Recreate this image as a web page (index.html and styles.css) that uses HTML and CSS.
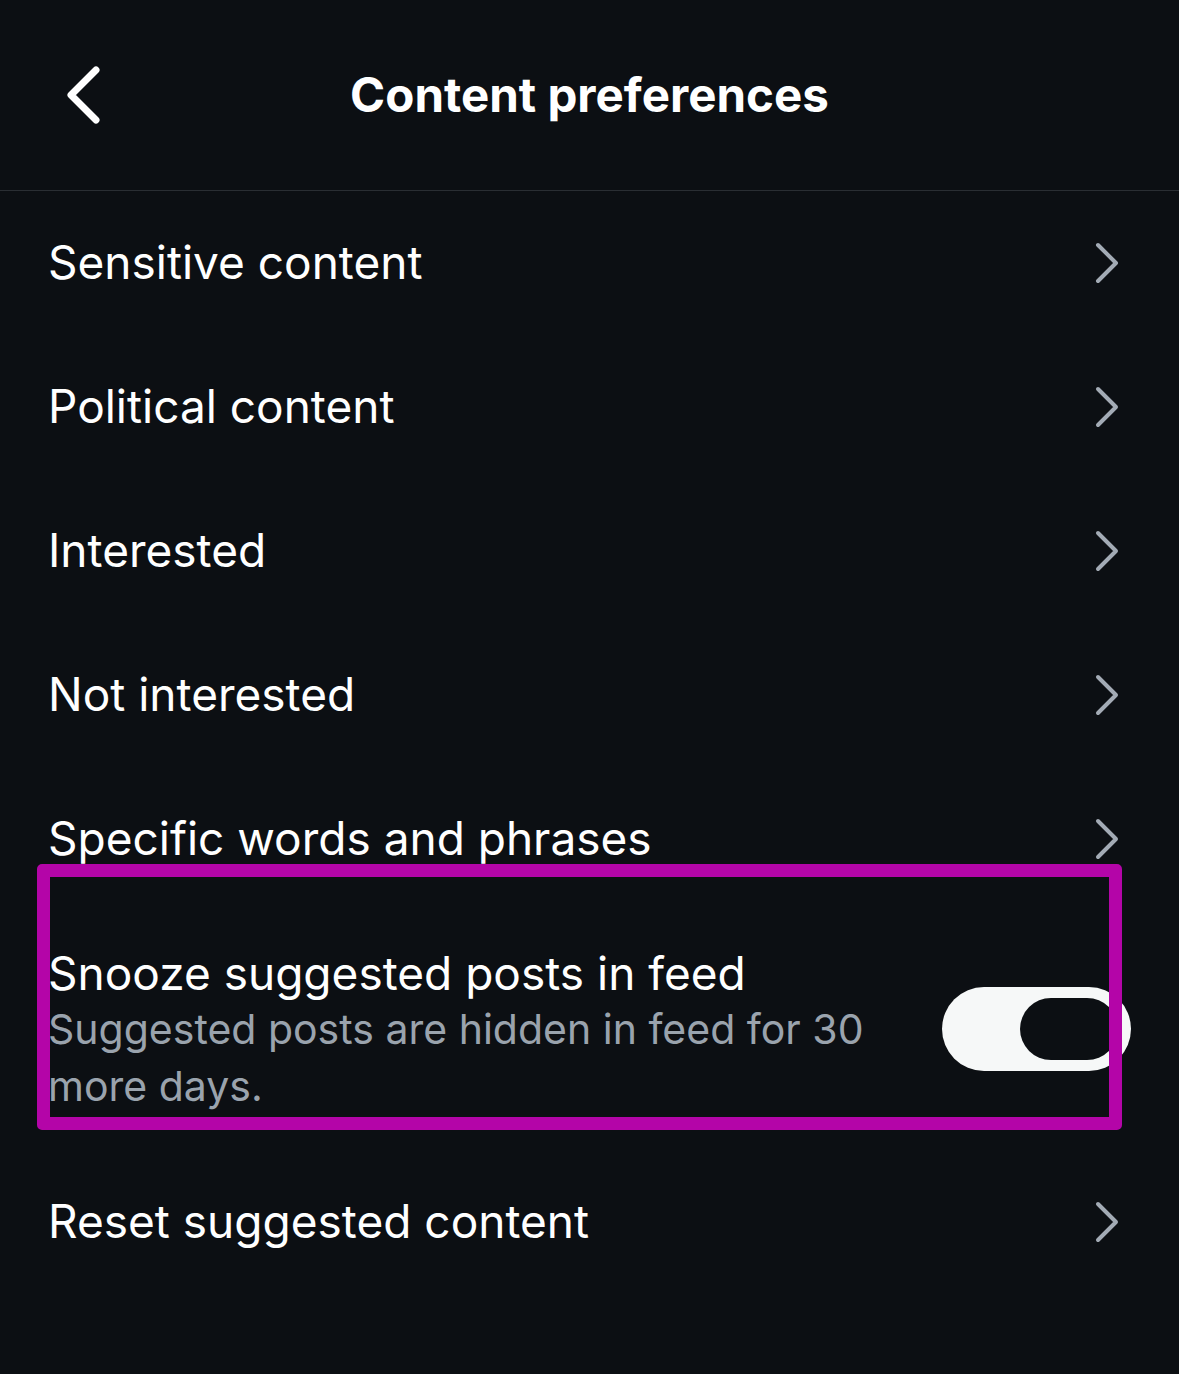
FILE: index.html
```html
<!DOCTYPE html>
<html>
<head>
<meta charset="utf-8">
<link rel="stylesheet" href="styles.css">
</head>
<body>
<div class="screen">
  <header class="header">
    <svg class="back" viewBox="0 0 40 60" width="40" height="60"><path d="M32 5 L7 30 L32 55" fill="none" stroke="#ffffff" stroke-width="7" stroke-linecap="round" stroke-linejoin="round"/></svg>
    <h1 class="title">Content preferences</h1>
  </header>
  <div class="list">
    <div class="row"><span class="label">Sensitive content</span><svg class="chev" viewBox="0 0 26 44" width="26" height="44"><path d="M4 4 L22 22 L4 40" fill="none" stroke="#a3abb5" stroke-width="4" stroke-linecap="round" stroke-linejoin="round"/></svg></div>
    <div class="row"><span class="label">Political content</span><svg class="chev" viewBox="0 0 26 44" width="26" height="44"><path d="M4 4 L22 22 L4 40" fill="none" stroke="#a3abb5" stroke-width="4" stroke-linecap="round" stroke-linejoin="round"/></svg></div>
    <div class="row"><span class="label">Interested</span><svg class="chev" viewBox="0 0 26 44" width="26" height="44"><path d="M4 4 L22 22 L4 40" fill="none" stroke="#a3abb5" stroke-width="4" stroke-linecap="round" stroke-linejoin="round"/></svg></div>
    <div class="row"><span class="label">Not interested</span><svg class="chev" viewBox="0 0 26 44" width="26" height="44"><path d="M4 4 L22 22 L4 40" fill="none" stroke="#a3abb5" stroke-width="4" stroke-linecap="round" stroke-linejoin="round"/></svg></div>
    <div class="row"><span class="label">Specific words and phrases</span><svg class="chev" viewBox="0 0 26 44" width="26" height="44"><path d="M4 4 L22 22 L4 40" fill="none" stroke="#a3abb5" stroke-width="4" stroke-linecap="round" stroke-linejoin="round"/></svg></div>
    <div class="snooze">
      <div class="snooze-text">
        <div class="snooze-title">Snooze suggested posts in feed</div>
        <div class="snooze-sub">Suggested posts are hidden in feed for 30 more days.</div>
      </div>
      <div class="toggle"><div class="knob"></div></div>
    </div>
    <div class="row"><span class="label">Reset suggested content</span><svg class="chev" viewBox="0 0 26 44" width="26" height="44"><path d="M4 4 L22 22 L4 40" fill="none" stroke="#a3abb5" stroke-width="4" stroke-linecap="round" stroke-linejoin="round"/></svg></div>
  </div>
  <div class="highlight"></div>
</div>
</body>
</html>
```
FILE: styles.css
```css
html, body {
  margin: 0;
  padding: 0;
  background: #0c0f13;
}
.screen {
  position: relative;
  width: 1179px;
  height: 1374px;
  background: #0c0f13;
  color: #ffffff;
  font-family: Inter, "Noto Sans", sans-serif;
  overflow: hidden;
}
.header {
  position: relative;
  height: 190px;
  border-bottom: 1px solid #2a2e33;
  display: flex;
  align-items: center;
  justify-content: center;
}
.back {
  position: absolute;
  left: 64px;
  top: 65px;
}
.title {
  margin: 0;
  font-size: 47.5px;
  font-weight: 700;
  letter-spacing: 0;
  padding-bottom: 2px;
}
.list {
  display: flex;
  flex-direction: column;
}
.row {
  height: 144px;
  display: flex;
  align-items: center;
  justify-content: space-between;
  padding: 0 59px 0 48px;
}
.label {
  font-size: 46px;
  font-weight: 400;
  letter-spacing: 0;
  padding-bottom: 2px;
}
.chev {
  display: block;
}
.snooze {
  display: flex;
  align-items: center;
  justify-content: space-between;
  padding: 34px 48px 35px 48px;
}
.snooze-text {
  width: 850px;
}
.snooze-title {
  font-size: 46px;
  line-height: 56px;
}
.snooze-sub {
  font-size: 41px;
  line-height: 57px;
  color: #9aa3ad;
}
.toggle {
  width: 189px;
  height: 84px;
  border-radius: 42px;
  background: #f6f8f8;
  display: flex;
  align-items: center;
  justify-content: flex-end;
  padding-right: 13px;
  box-sizing: border-box;
  margin-top: -2px;
}
.knob {
  width: 98px;
  height: 62px;
  border-radius: 31px;
  background: #0c0f13;
}
.highlight {
  position: absolute;
  left: 37px;
  top: 864px;
  width: 1085px;
  height: 266px;
  box-sizing: border-box;
  border: 13px solid #b405a8;
  border-radius: 5px;
}
```
